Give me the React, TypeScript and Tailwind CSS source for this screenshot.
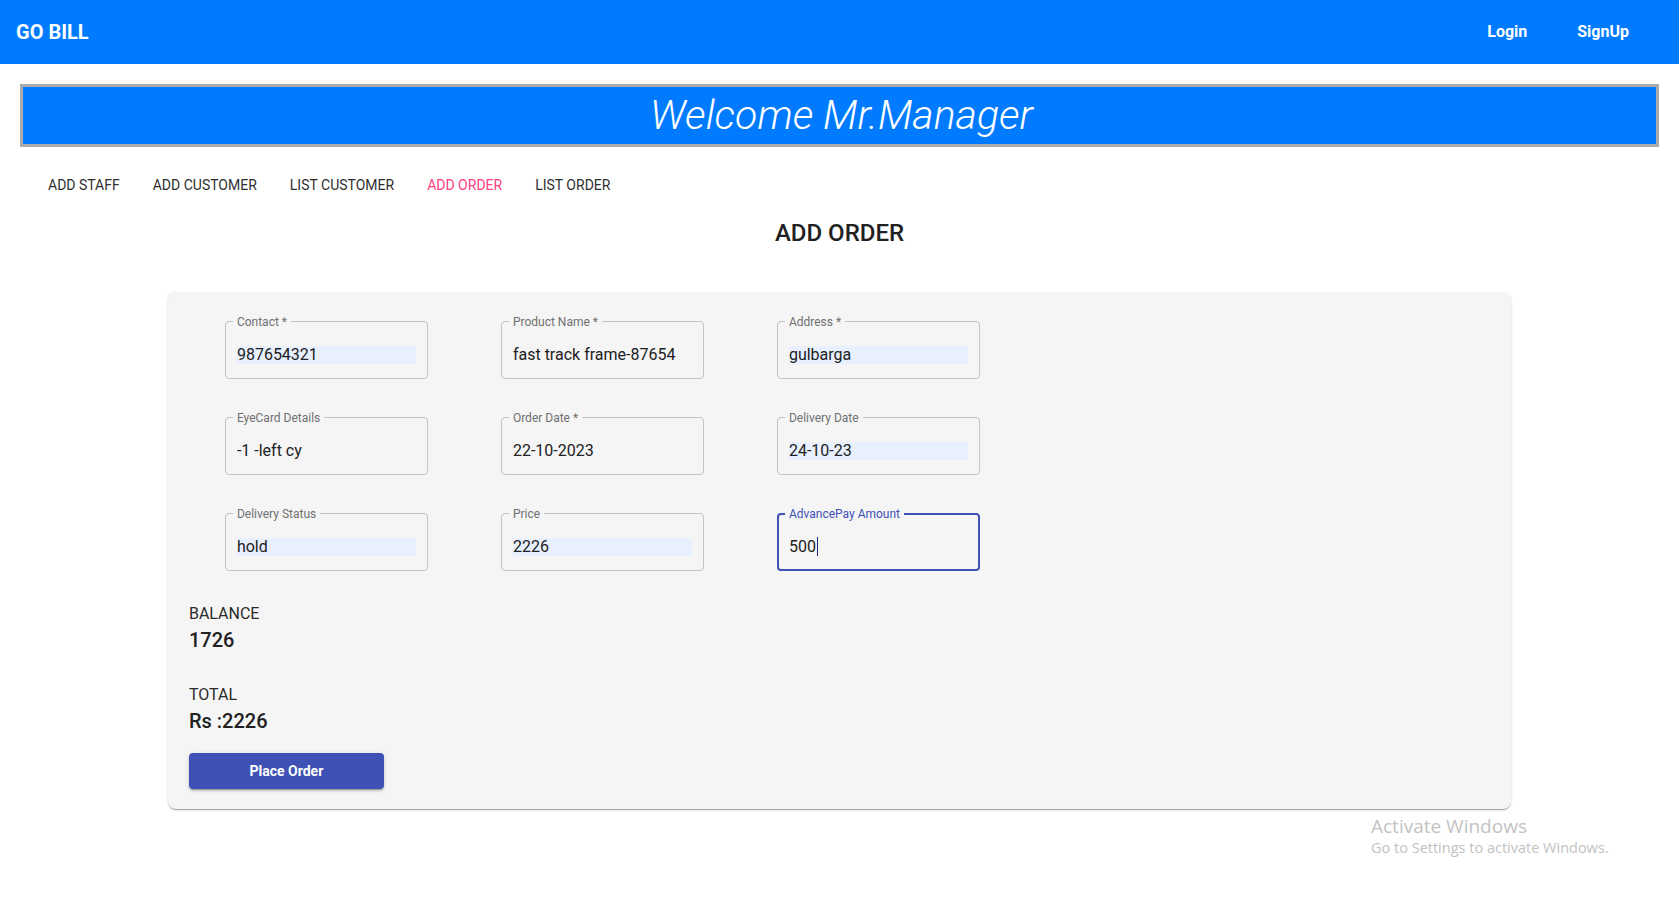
import React from "react";

type FieldProps = {
  label: string;
  value: string;
  filled?: boolean;
  focused?: boolean;
};

const Field = ({ label, value, filled, focused }: FieldProps) => (
  <div
    className={
      focused
        ? "relative h-[58px] w-[203px] rounded border-2 border-[#3f51b5] px-[10px] flex items-center pt-[9px]"
        : "relative h-[58px] w-[203px] rounded border border-[#c4c4c4] px-[11px] flex items-center pt-[9px]"
    }
  >
    <span
      className={
        focused
          ? "absolute left-[6px] -top-[9px] bg-[#f5f5f5] px-[4px] text-xs leading-4 text-[#3f51b5]"
          : "absolute left-[7px] -top-[8px] bg-[#f5f5f5] px-[4px] text-xs leading-4 text-[#707070]"
      }
    >
      {label}
    </span>
    {filled ? (
      <span className="block w-full bg-[#e8f0fe] h-[18px] leading-[18px] text-base text-[#212121]">
        {value}
      </span>
    ) : (
      <span className="flex items-center h-[18px] leading-[18px] text-base text-[#212121]">
        {value}
        {focused && <span className="ml-px inline-block h-[19px] w-px bg-[#1a237e]" />}
      </span>
    )}
  </div>
);

const NavTabs = () => {
  const tabs = ["ADD STAFF", "ADD CUSTOMER", "LIST CUSTOMER", "ADD ORDER", "LIST ORDER"];
  return (
    <div className="mt-5 flex gap-[1px] pl-8">
      {tabs.map((t) => (
        <button
          key={t}
          className={
            t === "ADD ORDER"
              ? "h-9 px-4 text-sm text-[#ff4081]"
              : "h-9 px-4 text-sm text-[#2f2f2f]"
          }
        >
          {t}
        </button>
      ))}
    </div>
  );
};

const App = () => {
  const fields: FieldProps[] = [
    { label: "Contact *", value: "987654321", filled: true },
    { label: "Product Name *", value: "fast track frame-87654" },
    { label: "Address *", value: "gulbarga", filled: true },
    { label: "EyeCard Details", value: "-1 -left cy" },
    { label: "Order Date *", value: "22-10-2023" },
    { label: "Delivery Date", value: "24-10-23", filled: true },
    { label: "Delivery Status", value: "hold", filled: true },
    { label: "Price", value: "2226", filled: true },
    { label: "AdvancePay Amount", value: "500", focused: true },
  ];

  return (
    <div className="relative min-h-[907px] bg-white font-['Roboto',sans-serif] text-[#212121]">
      <header className="flex h-16 items-center justify-between bg-[#007bff] pl-4 pr-[50px] text-white">
        <span className="text-xl font-bold">GO BILL</span>
        <nav className="flex gap-[50px] text-base font-bold">
          <a href="#">Login</a>
          <a href="#">SignUp</a>
        </nav>
      </header>

      <div className="mx-5 mt-5 flex h-[63px] items-center justify-center border-[3px] border-[#ababab] bg-[#007bff]">
        <h1 className="pl-1 text-[41px] font-light italic leading-none text-white">Welcome Mr.Manager</h1>
      </div>

      <NavTabs />

      <h2 className="mt-[14px] text-center text-2xl font-medium text-[#212121]">ADD ORDER</h2>

      <div className="mx-auto mt-[43px] w-[80%] rounded-lg bg-[#f5f5f5] pb-5 shadow-[0px_2px_1px_-1px_rgba(0,0,0,0.2),0px_1px_1px_0px_rgba(0,0,0,0.14),0px_1px_3px_0px_rgba(0,0,0,0.12)]">
        <div className="grid w-fit grid-cols-3 gap-x-[73px] gap-y-[38px] pl-[57px] pt-[29px]">
          {fields.map((f) => (
            <Field key={f.label} {...f} />
          ))}
        </div>

        <div className="mt-[31px] pl-[21px]">
          <p className="text-base leading-6 text-[#2b2b2b]">BALANCE</p>
          <p className="text-xl font-medium leading-7 text-[#212121]">1726</p>
          <p className="mt-[29px] text-base leading-6 text-[#2b2b2b]">TOTAL</p>
          <p className="text-xl font-medium leading-7 text-[#212121]">Rs :2226</p>
          <button className="mt-[18px] h-9 w-[195px] rounded bg-[#3f51b5] text-sm font-bold text-white shadow-[0px_3px_1px_-2px_rgba(0,0,0,0.2),0px_2px_2px_0px_rgba(0,0,0,0.14),0px_1px_5px_0px_rgba(0,0,0,0.12)]">
            Place Order
          </button>
        </div>
      </div>

      <div className="absolute left-[1371px] top-[814px] font-['Open_Sans',sans-serif] text-[#c2c2c2]">
        <p className="text-[19px] leading-6">Activate Windows</p>
        <p className="text-[14.5px] leading-5">Go to Settings to activate Windows.</p>
      </div>
    </div>
  );
};

export default App;
